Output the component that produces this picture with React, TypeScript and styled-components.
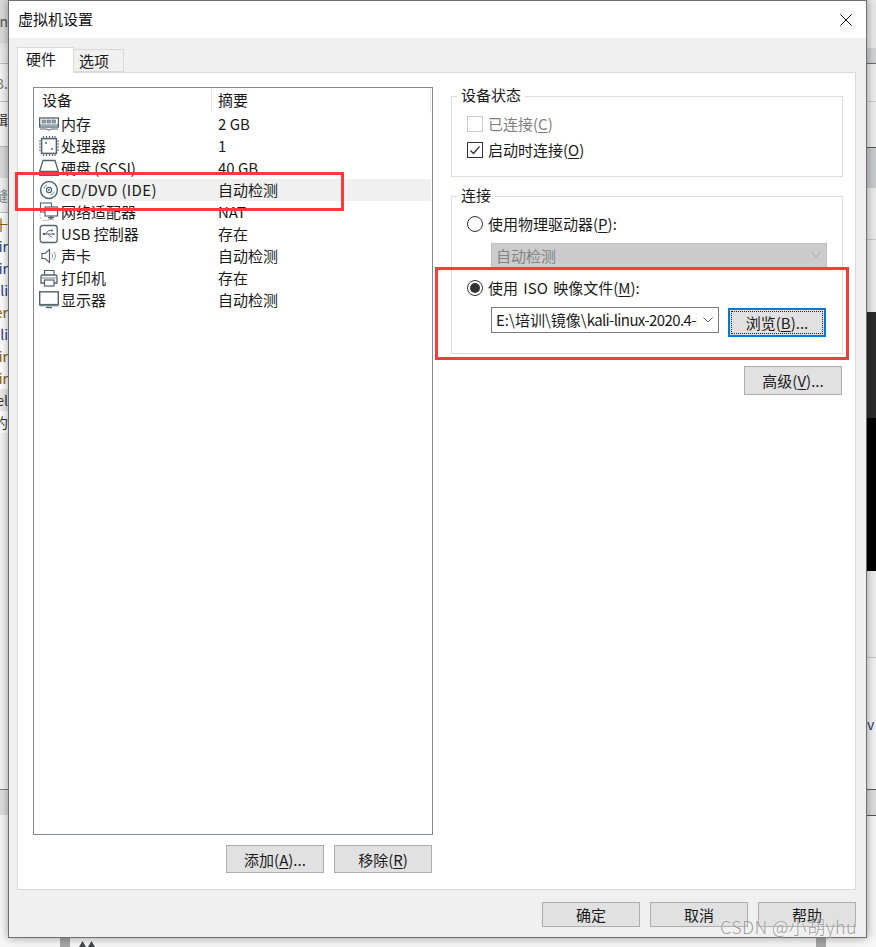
import React from "react";
import styled, { createGlobalStyle } from "styled-components";

const Global = createGlobalStyle`
  html, body { margin: 0; padding: 0; background: #f7f7f7; }
  * { box-sizing: border-box; }
  u { text-decoration-thickness: 1px; text-underline-offset: 2px; }
`;

const FONT = `"Noto Sans CJK SC", "Noto Sans", sans-serif`;

const Page = styled.div`
  position: relative;
  width: 876px;
  height: 947px;
  overflow: hidden;
  display: grid;
  grid-template-columns: 8px 859px 9px;
  grid-template-rows: 938px 9px;
  font-family: ${FONT};
  font-size: 15px;
  color: #1a1a1a;
`;

const Strip = styled.div`
  display: flex;
  flex-direction: column;
  overflow: hidden;
  background: #f7f7f7;
`;

const StripRow = styled.div<{ $h: number; $bg?: string; $line?: string; $color?: string; $right?: boolean }>`
  height: ${(p) => p.$h}px;
  flex: none;
  background: ${(p) => p.$bg || "transparent"};
  border-bottom: ${(p) => (p.$line ? `1px solid ${p.$line}` : "none")};
  color: ${(p) => p.$color || "#222"};
  line-height: ${(p) => p.$h}px;
  font-size: 14px;
  white-space: nowrap;
  display: flex;
  justify-content: ${(p) => (p.$right ? "flex-start" : "flex-end")};
  overflow: hidden;
`;

const BottomStrip = styled.div`
  grid-column: 1 / 4;
  background: #f7f7f7;
  display: flex;
  align-items: stretch;
  padding-left: 60px;
  padding-right: 50px;
  justify-content: space-between;
`;

const BottomGroup = styled.div`
  display: flex;
  gap: 8px;
`;

const BottomBar = styled.div`
  width: 10px;
  background: #a6a6a6;
`;

const Dialog = styled.div`
  position: relative;
  z-index: 1;
  display: flex;
  flex-direction: column;
  border: 1px solid #6e6e6e;
  background: #f0f0f0;
  box-shadow: 0 0 9px rgba(0, 0, 0, 0.38);
`;

const TitleBar = styled.div`
  height: 37px;
  flex: none;
  background: #fff;
  display: flex;
  align-items: center;
  justify-content: space-between;
  padding: 0 14px 0 9px;
  color: #111;
`;

const TitleText = styled.span`
  padding-bottom: 2px;
`;

const Body = styled.div`
  flex: 1;
  min-height: 0;
  display: flex;
  flex-direction: column;
  padding: 9px 10px 10px 8px;
`;

const TabBar = styled.div`
  display: flex;
  align-items: flex-end;
  height: 25px;
  flex: none;
`;

const Tab = styled.div<{ $active?: boolean }>`
  position: relative;
  z-index: ${(p) => (p.$active ? 2 : 1)};
  height: ${(p) => (p.$active ? 26 : 23)}px;
  margin-bottom: ${(p) => (p.$active ? -1 : 0)}px;
  width: ${(p) => (p.$active ? 57 : 50)}px;
  background: ${(p) => (p.$active ? "#fff" : "#f0f0f0")};
  border: 1px solid #d9d9d9;
  border-bottom: ${(p) => (p.$active ? "none" : "1px solid #d9d9d9")};
  border-left: ${(p) => (p.$active ? "1px solid #d9d9d9" : "none")};
  padding-left: ${(p) => (p.$active ? 8 : 5)}px;
  line-height: 22px;
`;

const TabPanel = styled.div`
  flex: 1;
  min-height: 0;
  background: #fff;
  border: 1px solid #d9d9d9;
  display: flex;
  padding: 14px 12px 16px 15px;
  gap: 18px;
`;

const LeftCol = styled.div`
  width: 400px;
  display: flex;
  flex-direction: column;
  gap: 10px;
`;

const RightCol = styled.div`
  width: 392px;
  display: flex;
  flex-direction: column;
  gap: 10px;
`;

const DeviceList = styled.div`
  flex: 1;
  min-height: 0;
  border: 1px solid #828790;
  display: flex;
  flex-direction: column;
`;

const ListHeader = styled.div`
  height: 25px;
  flex: none;
  display: flex;
  line-height: 23px;
`;

const HeaderCell = styled.div<{ $w?: number }>`
  height: 25px;
  width: ${(p) => (p.$w ? `${p.$w}px` : "auto")};
  flex: ${(p) => (p.$w ? "none" : 1)};
  padding-left: ${(p) => (p.$w ? 8 : 6)}px;
  border-right: 1px solid #e4e4e4;
  margin-right: ${(p) => (p.$w ? 0 : 1)}px;
`;

const Row = styled.div`
  height: 22px;
  display: flex;
  flex: none;
`;

const IconCell = styled.div`
  width: 25px;
  flex: none;
  padding-left: 5px;
  display: flex;
  align-items: center;
`;

const RowBody = styled.div<{ $selected?: boolean }>`
  flex: 1;
  display: flex;
  margin-right: 1px;
  padding-left: 2px;
  line-height: 21px;
  background: ${(p) => (p.$selected ? "#f0f0f0" : "transparent")};
`;

const NameCell = styled.div<{ $latin?: boolean }>`
  width: 157px;
  flex: none;
  white-space: nowrap;
  letter-spacing: ${(p) => (p.$latin ? "0.35px" : "0")};
`;

const SummaryCell = styled.div`
  flex: 1;
  white-space: nowrap;
`;

const ButtonRow = styled.div`
  display: flex;
  justify-content: flex-end;
  gap: 10px;
  flex: none;
  padding-right: 1px;
`;

const PushButton = styled.div<{ $h?: number; $focus?: boolean }>`
  width: 98px;
  height: ${(p) => p.$h || 28}px;
  flex: none;
  background: #e1e1e1;
  border: ${(p) => (p.$focus ? "2px solid #0078d7" : "1px solid #adadad")};
  outline: ${(p) => (p.$focus ? "1px dotted #222" : "none")};
  outline-offset: ${(p) => (p.$focus ? "-4px" : "0")};
  display: flex;
  align-items: center;
  justify-content: center;
  color: #1a1a1a;
  white-space: nowrap;
`;

const Group = styled.fieldset<{ $pb: number }>`
  margin: 0;
  padding: 9px 15px ${(p) => p.$pb}px 15px;
  border: 1px solid #dcdcdc;
  min-width: 0;
  display: flex;
  flex-direction: column;
`;

const GroupTitle = styled.legend`
  margin-left: -10px;
  padding: 0 4px;
  line-height: 16px;
  height: 18px;
  font-size: 15px;
  color: #1a1a1a;
`;

const OptionRow = styled.div<{ $disabled?: boolean; $mt?: number }>`
  height: 20px;
  margin-top: ${(p) => p.$mt || 0}px;
  display: flex;
  align-items: center;
  gap: 5px;
  white-space: nowrap;
  color: ${(p) => (p.$disabled ? "#7f7f7f" : "#1a1a1a")};
`;

const OptionLabel = styled.span<{ $spaced?: boolean }>`
  padding-bottom: 2px;
  word-spacing: ${(p) => (p.$spaced ? "2px" : "0")};
`;

const CheckBox = styled.span<{ $disabled?: boolean }>`
  width: 16px;
  height: 16px;
  flex: none;
  border: 1px solid ${(p) => (p.$disabled ? "#cccccc" : "#333")};
  display: flex;
  align-items: center;
  justify-content: center;
  background: #fff;
`;

const Radio = styled.span<{ $on?: boolean }>`
  width: 16px;
  height: 16px;
  flex: none;
  border-radius: 50%;
  border: 1px solid #333;
  background: #fff;
  display: flex;
  align-items: center;
  justify-content: center;
  &::after {
    content: "";
    width: 10px;
    height: 10px;
    border-radius: 50%;
    background: ${(p) => (p.$on ? "#333" : "transparent")};
  }
`;

const DisabledSelect = styled.div`
  margin: 9px 0 0 24px;
  width: 336px;
  height: 26px;
  background: #cccccc;
  border: 1px solid #bfbfbf;
  display: flex;
  align-items: center;
  justify-content: space-between;
  padding: 0 4px 2px 4px;
  color: #838383;
`;

const FileRow = styled.div`
  margin: 9px 0 0 24px;
  display: flex;
  align-items: flex-start;
  gap: 9px;
  height: 30px;
`;

const Combo = styled.div`
  width: 228px;
  height: 26px;
  border: 1px solid #7a7a7a;
  background: #fff;
  display: flex;
  align-items: center;
  padding: 0 4px 1px 4px;
  gap: 5px;
`;

const ComboText = styled.div`
  flex: 1;
  min-width: 0;
  overflow: hidden;
  white-space: nowrap;
`;

const ComboLatin = styled.span`
  letter-spacing: -0.62px;
`;

const FocusButtonWrap = styled.div`
  margin-top: 1px;
`;

const AdvancedRow = styled.div`
  display: flex;
  justify-content: flex-end;
  padding-right: 1px;
  margin-top: 2px;
`;

const Footer = styled.div`
  flex: none;
  display: flex;
  justify-content: flex-end;
  gap: 10px;
  margin-top: 12px;
`;

const Highlight = styled.div<{ $x: number; $y: number; $w: number; $h: number }>`
  position: absolute;
  z-index: 3;
  left: ${(p) => p.$x}px;
  top: ${(p) => p.$y}px;
  width: ${(p) => p.$w}px;
  height: ${(p) => p.$h}px;
  border: 3px solid #fb3a3a;
  pointer-events: none;
`;

const Watermark = styled.div`
  position: absolute;
  z-index: 4;
  left: 720px;
  top: 914px;
  font-size: 18px;
  font-weight: 300;
  line-height: 24px;
  letter-spacing: 0.4px;
  white-space: nowrap;
  color: rgba(140, 140, 140, 0.85);
  text-shadow: 0 0 2px rgba(255, 255, 255, 0.9);
`;

const ic = "#51626c";

const Svg: React.FC<{ children: React.ReactNode }> = ({ children }) => (
  <svg width="20" height="20" viewBox="0 0 20 20" fill="none" stroke={ic} strokeWidth="1.2">
    {children}
  </svg>
);

const MemoryIcon = () => (
  <Svg>
    <rect x="0.6" y="4" width="18.8" height="9" fill="#fff" strokeWidth="1.3" />
    <rect x="3" y="6" width="3.4" height="3" fill="#9aa8b0" strokeWidth="0.6" />
    <rect x="8" y="6" width="3.4" height="3" fill="#9aa8b0" strokeWidth="0.6" />
    <rect x="13" y="6" width="3.4" height="3" fill="#9aa8b0" strokeWidth="0.6" />
    <path d="M1 11h18M1 15h7l1 1h2l1-1h7" strokeWidth="1" />
  </Svg>
);
const CpuIcon = () => (
  <Svg>
    <rect x="2.6" y="2.6" width="14.8" height="14.8" strokeWidth="1.5" />
    <circle cx="7" cy="7" r="1" fill={ic} stroke="none" />
    <circle cx="13" cy="13" r="1" fill={ic} stroke="none" />
    <path d="M4.5 0v1.800M7.500 0v1.800M10.500 0v1.800M13.500 0v1.800M16 0v1.800M4.500 18.200v1.800M7.500 18.200v1.800M10.500 18.200v1.800M13.500 18.200v1.800M16 18.200v1.800M0 5h1.800M0 8h1.800M0 11h1.800M0 14h1.800M18.200 5h1.800M18.200 8h1.800M18.200 11h1.800M18.200 14h1.800" />
  </Svg>
);
const DiskIcon = () => (
  <Svg>
    <path d="M4 2.500h12l3.400 11H0.600z" strokeWidth="1.300" />
    <rect x="0.600" y="13.500" width="18.800" height="4" fill="#74848d" strokeWidth="1" />
  </Svg>
);
const CdIcon = () => (
  <Svg>
    <circle cx="10" cy="10" r="8.400" strokeWidth="1.500" stroke="#46697e" />
    <circle cx="10" cy="10" r="2.600" strokeWidth="1.200" stroke="#46697e" />
    <circle cx="10" cy="10" r="0.900" fill="#46697e" stroke="none" />
    <path d="M4.800 8.500a5.600 5.600 0 0 1 3.400-3.400M15.200 11.500a5.600 5.600 0 0 1-3.400 3.400" stroke="#8aa5b4" strokeWidth="1.100" />
  </Svg>
);
const NetIcon = () => (
  <Svg>
    <rect x="1.500" y="1" width="11" height="9" fill="#fff" strokeWidth="1.100" />
    <rect x="6" y="5" width="12.500" height="9" fill="#fff" strokeWidth="1.200" />
    <path d="M12 14v3M9 15.500h6M9.500 17h5" strokeWidth="1.200" />
    <path d="M1 12.500v1M1 16h1M4 18.500h6" strokeDasharray="1.200 1" strokeWidth="1" stroke="#8a98a0" />
  </Svg>
);
const UsbIcon = () => (
  <Svg>
    <rect x="1.200" y="1.500" width="17" height="17" rx="2.500" strokeWidth="1.300" />
    <path d="M4.500 10h11M6.500 10l3-3.400h2.600M9 10l2.600 2.800h1.600" strokeWidth="1" />
    <circle cx="5" cy="10" r="1.200" fill={ic} stroke="none" />
    <path d="M15.800 10l-2-1.300v2.600z" fill={ic} stroke="none" />
    <rect x="12" y="5.600" width="1.800" height="1.800" fill={ic} stroke="none" />
  </Svg>
);
const SpeakerIcon = () => (
  <Svg>
    <path d="M3 7.500h3l4.500-4v13l-4.500-4H3z" strokeWidth="1.200" />
    <path d="M12.800 7.500a4 4 0 0 1 0 5M14.800 5.800a6.400 6.400 0 0 1 0 8.400" strokeWidth="1" stroke="#8a98a0" />
  </Svg>
);
const PrinterIcon = () => (
  <Svg>
    <path d="M5.500 7V2.500h9.500V7" strokeWidth="1.200" />
    <path d="M5 15H2V8.500a1.500 1.500 0 0 1 1.500-1.500h13a1.500 1.500 0 0 1 1.500 1.500V15h-3" strokeWidth="1.300" />
    <rect x="5.500" y="12" width="9.500" height="6" fill="#fff" strokeWidth="1.200" />
    <path d="M3 10h14" strokeWidth="0.800" />
  </Svg>
);
const MonitorIcon = () => (
  <Svg>
    <rect x="0.700" y="1.800" width="18.600" height="12.800" fill="#fff" strokeWidth="1.400" />
    <path d="M0.700 15.500h18.600" strokeWidth="1.600" stroke="#74848d" />
    <path d="M7 17.500h6" strokeWidth="1.400" />
  </Svg>
);

const Chevron: React.FC<{ color: string }> = ({ color }) => (
  <svg width="12" height="8" viewBox="0 0 12 8" fill="none" stroke={color} strokeWidth="1">
    <path d="M1.500 1.500L6 6l4.500-4.500" />
  </svg>
);

const devices = [
  { icon: <MemoryIcon />, name: "内存", summary: "2 GB" },
  { icon: <CpuIcon />, name: "处理器", summary: "1" },
  { icon: <DiskIcon />, name: "硬盘 (SCSI)", summary: "40 GB" },
  { icon: <CdIcon />, name: "CD/DVD (IDE)", summary: "自动检测", selected: true, latin: true },
  { icon: <NetIcon />, name: "网络适配器", summary: "NAT" },
  { icon: <UsbIcon />, name: "USB 控制器", summary: "存在" },
  { icon: <SpeakerIcon />, name: "声卡", summary: "自动检测" },
  { icon: <PrinterIcon />, name: "打印机", summary: "存在" },
  { icon: <MonitorIcon />, name: "显示器", summary: "自动检测" },
];

const leftRows = [
  { h: 43, bg: "#dadada", text: "in", color: "#555" },
  { h: 5, bg: "#e8e8e8" },
  { h: 16, bg: "#ececec", line: "#bdbdbd" },
  { h: 38, bg: "#f4f4f4", text: "3.", color: "#777", line: "#bdbdbd" },
  { h: 34, bg: "#f6f6f6", text: "辑", color: "#333" },
  { h: 11, bg: "#f6f6f6", line: "#bdbdbd" },
  { h: 31, bg: "#d9d9d9" },
  { h: 35, bg: "#f2f2f2", text: "缝", color: "#888", line: "#bdbdbd" },
  { h: 22, bg: "#fff", text: "十", color: "#8a5a00" },
  { h: 22, bg: "#fff", text: "ir", color: "#1d3a7a" },
  { h: 22, bg: "#fff", text: "ir", color: "#1d3a7a" },
  { h: 22, bg: "#fff", text: "li", color: "#1d3a7a" },
  { h: 22, bg: "#fff", text: "er", color: "#8a5a00" },
  { h: 22, bg: "#fff", text: "li", color: "#1d3a7a" },
  { h: 22, bg: "#fff", text: "ir", color: "#8a5a00" },
  { h: 22, bg: "#fff", text: "ir", color: "#8a5a00" },
  { h: 22, bg: "#ebebeb", text: "el", color: "#333" },
  { h: 22, bg: "#fff", text: "约", color: "#333" },
  { h: 357, bg: "#f3f3f3", line: "#7d8084" },
  { h: 25, bg: "#dedede" },
];

const rightRows = [
  { h: 48, bg: "#e8e8e8" },
  { h: 16, bg: "#cfd2d4", line: "#6a6a6a" },
  { h: 38, bg: "#ececec", line: "#c8c8c8" },
  { h: 46, bg: "#ececec", line: "#555555" },
  { h: 40, bg: "#c9cccf" },
  { h: 52, bg: "#ebebeb", line: "#c8c8c8" },
  { h: 72, bg: "#ebebeb" },
  { h: 106, bg: "#2c2c2c" },
  { h: 153, bg: "#000" },
  { h: 87, bg: "#eeeeee", line: "#c8c8c8" },
  { h: 132, bg: "#f2f2f2", text: "v", color: "#1d3a7a", line: "#555555" },
  { h: 26, bg: "#dcdcdc", line: "#555555" },
  { h: 122, bg: "#f4f4f4" },
];

const App: React.FC = () => (
  <>
    <Global />
    <Page>
      <Strip>
        {leftRows.map((r, i) => (
          <StripRow key={i} $h={r.h} $bg={r.bg} $line={r.line} $color={r.color}>
            {r.text}
          </StripRow>
        ))}
      </Strip>
      <Dialog>
        <TitleBar>
          <TitleText>虚拟机设置</TitleText>
          <svg width="12" height="12" viewBox="0 0 12 12" stroke="#111" strokeWidth="1">
            <path d="M0.300 0.300l11.400 11.400M11.700 0.300L0.300 11.700" />
          </svg>
        </TitleBar>
        <Body>
          <TabBar>
            <Tab $active>硬件</Tab>
            <Tab>选项</Tab>
          </TabBar>
          <TabPanel>
            <LeftCol>
              <DeviceList>
                <ListHeader>
                  <HeaderCell $w={178}>设备</HeaderCell>
                  <HeaderCell>摘要</HeaderCell>
                </ListHeader>
                {devices.map((d) => (
                  <Row key={d.name}>
                    <IconCell>{d.icon}</IconCell>
                    <RowBody $selected={d.selected}>
                      <NameCell $latin={d.latin}>{d.name}</NameCell>
                      <SummaryCell>{d.summary}</SummaryCell>
                    </RowBody>
                  </Row>
                ))}
              </DeviceList>
              <ButtonRow>
                <PushButton>
                  添加(<u>A</u>)...
                </PushButton>
                <PushButton>
                  移除(<u>R</u>)
                </PushButton>
              </ButtonRow>
            </LeftCol>
            <RightCol>
              <Group $pb={16}>
                <GroupTitle>设备状态</GroupTitle>
                <OptionRow $disabled>
                  <CheckBox $disabled />
                  <OptionLabel>
                    已连接(<u>C</u>)
                  </OptionLabel>
                </OptionRow>
                <OptionRow $mt={6}>
                  <CheckBox>
                    <svg width="12" height="12" viewBox="0 0 12 12" fill="none" stroke="#333" strokeWidth="1.300">
                      <path d="M1.500 6.500L4.500 9.500L10.500 2.500" />
                    </svg>
                  </CheckBox>
                  <OptionLabel>
                    启动时连接(<u>O</u>)
                  </OptionLabel>
                </OptionRow>
              </Group>
              <Group $pb={16}>
                <GroupTitle>连接</GroupTitle>
                <OptionRow>
                  <Radio />
                  <OptionLabel>
                    使用物理驱动器(<u>P</u>):
                  </OptionLabel>
                </OptionRow>
                <DisabledSelect>
                  自动检测
                  <Chevron color="#a8a8a8" />
                </DisabledSelect>
                <OptionRow $mt={9}>
                  <Radio $on />
                  <OptionLabel $spaced>
                    使用 ISO 映像文件(<u>M</u>):
                  </OptionLabel>
                </OptionRow>
                <FileRow>
                  <Combo>
                    <ComboText>
                      E:\培训\镜像\<ComboLatin>kali-linux-2020.4-i</ComboLatin>
                    </ComboText>
                    <Chevron color="#555" />
                  </Combo>
                  <FocusButtonWrap>
                    <PushButton $focus $h={29}>
                      浏览(<u>B</u>)...
                    </PushButton>
                  </FocusButtonWrap>
                </FileRow>
              </Group>
              <AdvancedRow>
                <PushButton $h={29}>
                  高级(<u>V</u>)...
                </PushButton>
              </AdvancedRow>
            </RightCol>
          </TabPanel>
          <Footer>
            <PushButton $h={25}>确定</PushButton>
            <PushButton $h={25}>取消</PushButton>
            <PushButton $h={25}>帮助</PushButton>
          </Footer>
        </Body>
      </Dialog>
      <Strip>
        {rightRows.map((r, i) => (
          <StripRow key={i} $h={r.h} $bg={r.bg} $line={r.line} $color={r.color} $right>
            {r.text}
          </StripRow>
        ))}
      </Strip>
      <BottomStrip>
        <BottomGroup>
          <BottomBar />
          <svg width="18" height="9" viewBox="0 0 18 9" fill="#44444c">
            <path d="M1 9l3.500-6 3.500 6zM10 9l3.500-6 3.500 6z" />
          </svg>
        </BottomGroup>
        <BottomBar />
      </BottomStrip>
      <Highlight $x={15} $y={172} $w={329} $h={39} />
      <Highlight $x={435} $y={267} $w={414} $h={93} />
      <Watermark>CSDN @小胡yhu</Watermark>
    </Page>
  </>
);

export default App;
